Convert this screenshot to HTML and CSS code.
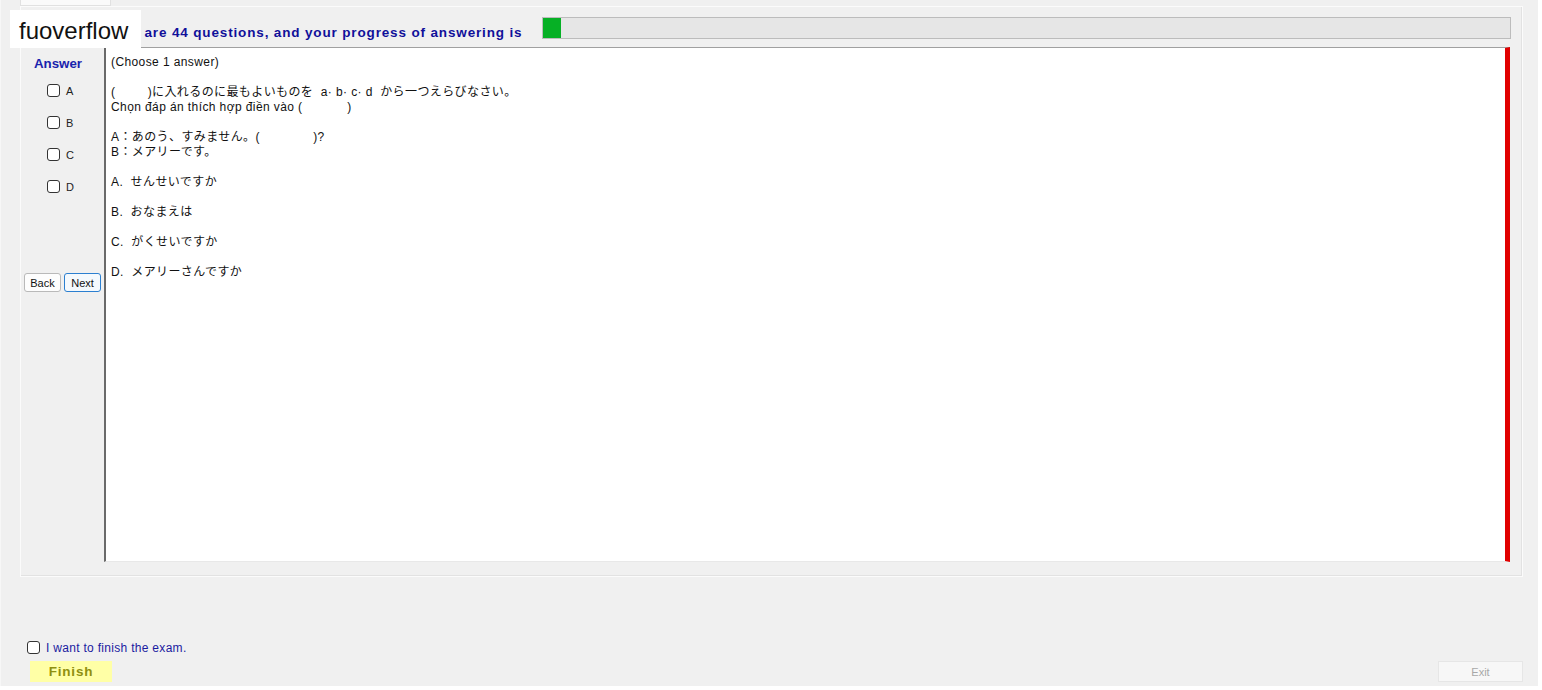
FILE: index.html
```html
<!DOCTYPE html>
<html lang="en">
<head>
  <meta charset="UTF-8">
  <meta name="viewport" content="width=device-width, initial-scale=1.0">
  <title>Exam</title>
  <link rel="stylesheet" href="styles.css">
</head>
<body>
  <div class="window">
    <div class="tab"></div>

    <div class="group">
      <div class="header">
        <span class="header-text"><span class="header-lead">There </span>are 44 questions, and your progress of answering is</span>
        <div class="progress"><div class="progress-fill" style="width: 18px;"></div></div>
      </div>

      <div class="exam-body">
        <div class="answer-col">
          <div class="answer-title">Answer</div>
          <div class="answer-list">
            <label class="answer-row"><input type="checkbox" class="box"><span>A</span></label>
            <label class="answer-row"><input type="checkbox" class="box"><span>B</span></label>
            <label class="answer-row"><input type="checkbox" class="box"><span>C</span></label>
            <label class="answer-row"><input type="checkbox" class="box"><span>D</span></label>
          </div>
          <div class="nav-buttons">
            <button class="nav-btn">Back</button>
            <button class="nav-btn nav-btn-focus">Next</button>
          </div>
        </div>

        <div class="question">
          <p>(Choose 1 answer)</p>
          <p>(　　&nbsp;&nbsp;)に入れるのに最もよいものを&nbsp;&nbsp;a· b· c· d&nbsp;&nbsp;から一つえらびなさい。<br>Chọn đáp án thích hợp điền vào (&nbsp;&nbsp;&nbsp;&nbsp;&nbsp;&nbsp;&nbsp;&nbsp;&nbsp;&nbsp;&nbsp;&nbsp;)</p>
          <p>A：あのう、すみません。(　　　　&nbsp;)?<br>B：メアリーです。</p>
          <p>A.&nbsp;&nbsp;せんせいですか</p>
          <p>B.&nbsp;&nbsp;おなまえは</p>
          <p>C.&nbsp;&nbsp;がくせいですか</p>
          <p>D.&nbsp;&nbsp;メアリーさんですか</p>
        </div>
      </div>
    </div>

    <div class="footer">
      <div class="footer-left">
        <label class="finish-check"><input type="checkbox" class="box"><span>I want to finish the exam.</span></label>
        <button class="finish-btn">Finish</button>
      </div>
      <button class="exit-btn" disabled>Exit</button>
    </div>

    <div class="brand">fuoverflow</div>
  </div>
</body>
</html>
```

FILE: styles.css
```css
body {
  margin: 0;
  background: #ffffff;
  font-family: "Liberation Sans", Arial, "Noto Sans CJK JP", sans-serif;
}

.window {
  position: relative;
  width: 1538px;
  height: 686px;
  background: #f0f0f0;
  border-left: 1px solid #f7f7f7;
  box-sizing: border-box;
}

.tab {
  margin-left: 19px;
  width: 91px;
  height: 6px;
  background: #fafafa;
  border: 1px solid #e1e1e1;
  border-top: none;
  box-sizing: border-box;
}

.group {
  margin-left: 19px;
  width: 1503px;
  height: 571px;
  border: 1px solid #fbfbfb;
  box-shadow: inset -1px -1px 0 #e2e2e2;
  box-sizing: border-box;
}

.header {
  display: flex;
  align-items: flex-start;
  height: 40px;
}

.header-text {
  margin-left: 83px;
  margin-top: 18px;
  font-size: 13.5px;
  font-weight: bold;
  letter-spacing: 0.85px;
  color: #10109a;
  white-space: nowrap;
}

.header-lead {
  letter-spacing: 0;
}

.progress {
  margin-left: auto;
  margin-right: 11px;
  margin-top: 10px;
  width: 969px;
  height: 22px;
  background: #e6e6e6;
  border: 1px solid #bcbcbc;
  box-sizing: border-box;
}

.progress-fill {
  height: 100%;
  background: #06b025;
}

.exam-body {
  display: flex;
}

.answer-col {
  width: 83px;
  flex-shrink: 0;
}

.answer-title {
  padding-top: 9px;
  padding-left: 13px;
  line-height: 16px;
  font-size: 13.3px;
  font-weight: bold;
  color: #1a23ad;
}

.answer-list {
  margin-top: 12px;
  display: flex;
  flex-direction: column;
  gap: 19px;
}

.answer-row {
  display: flex;
  align-items: center;
  gap: 6px;
  height: 13px;
  padding-left: 26px;
  font-size: 11px;
  color: #222;
}

.box {
  appearance: none;
  margin: 0;
  width: 13px;
  height: 13px;
  background: #ffffff;
  border: 1px solid #333333;
  border-radius: 3px;
  box-sizing: border-box;
}

.nav-buttons {
  display: flex;
  gap: 3px;
  margin-top: 80px;
  padding-left: 3px;
}

.nav-btn {
  width: 37px;
  height: 19px;
  padding: 0;
  font-family: "Liberation Sans", Arial, sans-serif;
  font-size: 11px;
  color: #111;
  background: #fdfdfd;
  border: 1px solid #b9b9b9;
  border-radius: 3px;
}

.nav-btn-focus {
  border-color: #2b7fd0;
  background: #f4f9fd;
}

.question {
  width: 1406px;
  height: 515px;
  box-sizing: border-box;
  background: #ffffff;
  border-top: 1px solid #a0a0a0;
  border-left: 2px solid #6a6a6a;
  border-right: 5px solid #e10000;
  border-bottom: 1px solid #e8e8e8;
  padding: 7px 5px;
  font-size: 12px;
  letter-spacing: 0.4px;
  line-height: 15px;
  color: #111;
}

.question p {
  margin: 0 0 15px;
  white-space: nowrap;
}

.footer {
  display: flex;
  justify-content: space-between;
  align-items: flex-end;
  margin-top: 63px;
  padding-right: 15px;
}

.footer-left {
  display: flex;
  flex-direction: column;
  gap: 7px;
  padding-left: 26px;
}

.finish-check {
  display: flex;
  align-items: center;
  gap: 6px;
  height: 13px;
  margin-top: 1px;
  font-size: 12px;
  letter-spacing: 0.3px;
  color: #1b1ba0;
}

.finish-btn {
  margin-left: 3px;
  width: 82px;
  height: 21px;
  padding: 0;
  border: none;
  background: #ffffa6;
  font-family: "Liberation Sans", Arial, sans-serif;
  font-size: 13.5px;
  font-weight: bold;
  letter-spacing: 0.8px;
  color: #8f8f10;
}

.exit-btn {
  width: 85px;
  height: 21px;
  padding: 0;
  background: #f7f7f7;
  border: 1px solid #e6e6e6;
  font-family: "Liberation Sans", Arial, sans-serif;
  font-size: 11px;
  color: #a8a8a8;
}

.brand {
  position: absolute;
  left: 9px;
  top: 10px;
  width: 131px;
  height: 38px;
  background: #ffffff;
  padding-left: 9px;
  box-sizing: border-box;
  font-size: 24px;
  line-height: 42px;
  color: #111;
}
```
